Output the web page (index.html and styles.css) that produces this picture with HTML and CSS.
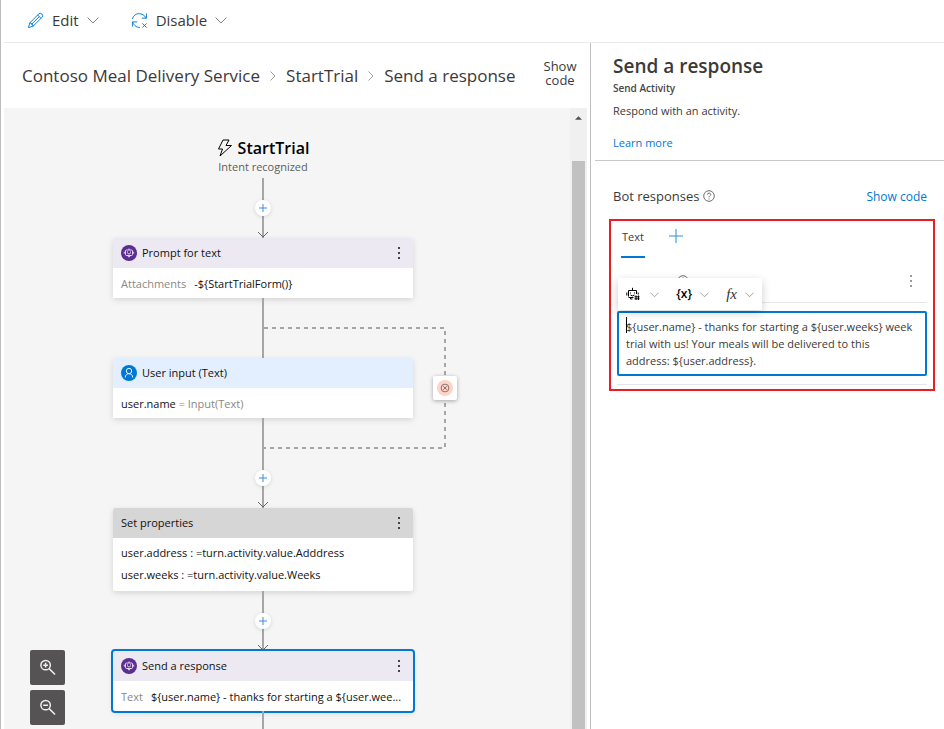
FILE: index.html
```html
<!DOCTYPE html>
<html lang="en">
<head>
<meta charset="utf-8">
<title>Contoso Meal Delivery Service</title>
<link rel="stylesheet" href="styles.css">
</head>
<body>
<svg class="defs" aria-hidden="true">
  <symbol id="chevron-down" viewBox="0 0 12 12"><path d="M.5 3.5 6 9l5.500-5.500" /></symbol>
  <symbol id="chevron-right" viewBox="0 0 8 12"><path d="M1.500 1.500 6 6l-4.500 4.500" /></symbol>
  <symbol id="kebab" viewBox="0 0 4 14"><rect x="1" y="1" width="2" height="2"/><rect x="1" y="6" width="2" height="2"/><rect x="1" y="11" width="2" height="2"/></symbol>
  <symbol id="plus" viewBox="0 0 8 8"><path d="M4 0v8M0 4h8"/></symbol>
  <symbol id="arrow" viewBox="0 0 12 7"><path d="M1 1l5 5 5-5"/></symbol>
  <symbol id="bot" viewBox="0 0 16 16">
    <circle cx="8" cy="8" r="8" fill="#5c2e91"/>
    <g fill="none" stroke="#fff" stroke-width=".8"><rect x="4.500" y="5" width="7" height="5.500" rx="1"/><path d="M8 5V3.500M3.300 6.700v2M12.700 6.700v2M6.500 10.500 8 12.200l1.500-1.700M6.500 8.500q1.500 1 3 0"/></g>
    <path d="M6 6.500h1v1H6zM9 6.500h1v1H9z" fill="#fff"/>
  </symbol>
  <symbol id="user" viewBox="0 0 16 16">
    <circle cx="8" cy="8" r="8" fill="#0078d7"/>
    <g fill="none" stroke="#fff" stroke-width=".9"><circle cx="8" cy="6" r="2.700"/><path d="M4.300 12.500C4.300 10 6 8.700 8 8.700s3.700 1.300 3.700 3.800"/></g>
  </symbol>
  <symbol id="help" viewBox="0 0 12 12"><circle cx="6" cy="6" r="5.300"/><path d="M4.300 4.700C4.300 2.500 7.700 2.600 7.700 4.600 7.700 5.800 6 5.800 6 7.300M6 8.400v1"/></symbol>
</svg>

<header class="toolbar">
  <button class="command" type="button">
    <svg class="command-icon" viewBox="0 0 18 18"><path d="M1.500 16.500 3 11.500 12.500 2Q14.200.6 15.800 2.200T16 5.500L6.500 15zM3 11.500Q6 12 6.500 15M11.300 3.200l3.500 3.500M4.600 13.300 13 5"/></svg>
    Edit
    <svg class="chevron"><use href="#chevron-down"/></svg>
  </button>
  <button class="command" type="button">
    <svg class="command-icon" viewBox="0 0 18 18"><path d="M1.500 7.500C3 0 13 0 16 6.500M16.500 1.500v5h-5M1.500 15.500v-5h5M1.800 10.800C3.500 15 6.500 16.500 9.500 16.300M12 12l4.500 4.500M16.500 12 12 16.500"/></svg>
    Disable
    <svg class="chevron"><use href="#chevron-down"/></svg>
  </button>
</header>

<div class="workspace">
  <main class="editor">
    <div class="editor-head">
      <nav class="breadcrumb" aria-label="Breadcrumb">
        <a href="#">Contoso Meal Delivery Service</a>
        <svg><use href="#chevron-right"/></svg>
        <a href="#">StartTrial</a>
        <svg><use href="#chevron-right"/></svg>
        <a href="#">Send a response</a>
      </nav>
      <button class="code-toggle" type="button">Show code</button>
    </div>

    <div class="canvas">
      <div class="stage">
        <div class="flow">
          <div class="trigger">
            <h1><svg viewBox="0 0 16 18"><path d="M6 1h6L9 6.500h5.500L3 17l2.500-7H1.500z"/></svg>StartTrial</h1>
            <p>Intent recognized</p>
          </div>

          <div class="link">
            <button class="add" type="button" aria-label="Add action"><svg><use href="#plus"/></svg></button>
            <svg class="arrow"><use href="#arrow"/></svg>
          </div>

          <section class="card">
            <header class="card-head prompt"><svg class="badge"><use href="#bot"/></svg><span>Prompt for text</span>
              <button class="more" type="button" aria-label="More"><svg><use href="#kebab"/></svg></button></header>
            <p class="card-line"><span class="muted">Attachments</span><span>-${StartTrialForm()}</span></p>
          </section>

          <div class="link"></div>

          <section class="card">
            <header class="card-head input"><svg class="badge"><use href="#user"/></svg><span>User input (Text)</span></header>
            <p class="card-line"><span>user.name <span class="muted">= Input(Text)</span></span></p>
            <div class="retry">
              <svg class="retry-path" viewBox="0 0 183 122"><path d="M1 1h181v120H1"/></svg>
              <button class="retry-node" type="button" aria-label="Invalid input">
                <svg viewBox="0 0 16 16"><circle cx="8" cy="8" r="8" fill="#ffd3c7"/><g fill="none" stroke="#6b5a58" stroke-width=".8"><circle cx="8" cy="8" r="3.900"/><path d="M6.200 6.200l3.600 3.600M9.800 6.200 6.200 9.800"/></g></svg>
              </button>
            </div>
          </section>

          <div class="link tall">
            <button class="add" type="button" aria-label="Add action"><svg><use href="#plus"/></svg></button>
            <svg class="arrow"><use href="#arrow"/></svg>
          </div>

          <section class="card">
            <header class="card-head props"><span>Set properties</span>
              <button class="more" type="button" aria-label="More"><svg><use href="#kebab"/></svg></button></header>
            <div class="card-list">
              <p>user.address : =turn.activity.value.Adddress</p>
              <p>user.weeks : =turn.activity.value.Weeks</p>
            </div>
          </section>

          <div class="link">
            <button class="add" type="button" aria-label="Add action"><svg><use href="#plus"/></svg></button>
            <svg class="arrow"><use href="#arrow"/></svg>
          </div>

          <section class="card selected">
            <header class="card-head prompt"><svg class="badge"><use href="#bot"/></svg><span>Send a response</span>
              <button class="more" type="button" aria-label="More"><svg><use href="#kebab"/></svg></button></header>
            <p class="card-line"><span class="muted">Text</span><span>${user.name} - thanks for starting a ${user.wee...</span></p>
          </section>

          <div class="link"></div>
        </div>
        <div class="zoom">
          <button type="button" aria-label="Zoom in"><svg viewBox="0 0 18 18"><circle cx="7" cy="6.500" r="5"/><path d="M10.700 10.200 17 16.500M4.500 6.500h5M7 4v5"/></svg></button>
          <button type="button" aria-label="Zoom out"><svg viewBox="0 0 18 18"><circle cx="7" cy="6.500" r="5"/><path d="M10.700 10.200 17 16.500M4.500 6.500h5"/></svg></button>
        </div>
      </div>
      <div class="scrollbar"><svg viewBox="0 0 8 4"><path d="M0 4 4 0l4 4z"/></svg><div class="thumb"></div></div>
    </div>
  </main>

  <aside class="panel">
    <div class="panel-head">
      <h2>Send a response</h2>
      <h3>Send Activity</h3>
      <p>Respond with an activity.</p>
      <a href="#">Learn more</a>
    </div>
    <div class="responses-head">
      <span>Bot responses</span><svg class="help"><use href="#help"/></svg>
      <a href="#">Show code</a>
    </div>
    <section class="responses">
      <div class="tabs">
        <button class="tab" type="button">Text</button>
        <button class="tab-add" type="button" aria-label="Add response type"><svg><use href="#plus"/></svg></button>
      </div>
      <div class="variation">
        <svg class="help"><use href="#help"/></svg>
        <button class="more" type="button" aria-label="More"><svg><use href="#kebab"/></svg></button>
        <div class="insert">
          <button type="button" aria-label="Insert template">
            <svg class="insert-bot" viewBox="0 0 14 14"><path d="M2.500 9.500v-6h8v3.500M2.500 10.500h5M6.500 3.500V.8M.8 5.500v3M12.200 5.500v2M4.500 8q1.800 1.800 4 0M4.500 5.500v1M8.500 5.500v1M4.500 10.500v1.500h2"/><path d="M10 8.500v4.500M12.500 8.500v4.500M8.500 9.800h5M8.500 11.800h5"/></svg>
            <svg class="chevron"><use href="#chevron-down"/></svg></button>
          <button type="button"><b>{x}</b><svg class="chevron"><use href="#chevron-down"/></svg></button>
          <button type="button"><i>fx</i><svg class="chevron"><use href="#chevron-down"/></svg></button>
        </div>
      </div>
      <div class="field">
        <textarea rows="3" spellcheck="false" aria-label="Response text">${user.name} - thanks for starting a ${user.weeks} week trial with us! Your meals will be delivered to this address: ${user.address}.</textarea>
        <span class="caret"></span>
      </div>
    </section>
  </aside>
</div>
</body>
</html>
```
FILE: styles.css
```css
* { box-sizing: border-box; }
body {
  margin: 0;
  height: 100vh;
  display: flex;
  flex-direction: column;
  border-left: 1px solid #bdbdbd;
  background: #fff;
  color: #3b3a39;
  font: 11px/16px "Open Sans", "Noto Sans", sans-serif;
  overflow: hidden;
}
h1, h2, h3, p { margin: 0; font-weight: 400; }
button { border: 0; padding: 0; background: none; color: inherit; font: inherit; }
a { color: #0078d4; text-decoration: none; }
svg { display: block; flex: none; fill: none; stroke: currentColor; overflow: visible; }
.defs { position: absolute; width: 0; height: 0; }

.toolbar {
  display: flex;
  align-items: center;
  gap: 32px;
  height: 43px;
  margin-left: 3px;
  padding: 0 23px 2px;
  border-bottom: 1px solid #eaeaea;
}
.command { display: flex; align-items: center; gap: 8px; font-size: 15px; }
.command-icon { width: 17px; height: 17px; color: #0078d4; }
.chevron { width: 12px; height: 12px; color: #8a8886; }

.workspace { flex: 1; min-height: 0; display: grid; grid-template-columns: minmax(0, 1fr) 354px; }
.editor { display: flex; flex-direction: column; min-height: 0; padding: 0 3px; }
.editor-head { display: flex; align-items: center; height: 65px; padding: 0 7px 0 18px; }
.breadcrumb { flex: 1; display: flex; align-items: center; gap: 9px; font-size: 17px; white-space: nowrap; }
.breadcrumb a { color: inherit; }
.breadcrumb svg { width: 8px; height: 12px; color: #a19f9d; }
.code-toggle { width: 40px; font-size: 13px; line-height: 14px; padding-bottom: 6px; }

.canvas { flex: 1; min-height: 0; display: flex; background: #f5f5f5; overflow: hidden; }
.stage { flex: 1; position: relative; }
.flow { width: 348px; margin: 0 auto; padding: 29px 48px 0 0; color: #111; }
.trigger { height: 41px; display: flex; flex-direction: column; align-items: center; color: #605e5c; }
.trigger h1 { display: flex; align-items: center; gap: 5px; font-size: 16px; line-height: 22px; font-weight: 600; color: #000; }
.trigger svg { width: 16px; height: 18px; }

.link {
  position: relative;
  height: 60px;
  display: flex;
  align-items: center;
  justify-content: center;
  background: linear-gradient(#a6a6a6, #a6a6a6) center / 2px 100% no-repeat;
}
.link.tall { height: 90px; padding-top: 30px; }
.add { width: 16px; height: 16px; display: grid; place-items: center; border-radius: 50%; background: #fff; box-shadow: 0 1px 4px #0002; color: #3b8be8; }
.add svg { width: 8px; height: 8px; }
.arrow { position: absolute; bottom: 0; left: 144px; width: 12px; height: 7px; color: #666; }

.card { position: relative; z-index: 0; background: #fff; border-radius: 2px; box-shadow: 0 2px 6px #0002; }
.card-head { display: flex; align-items: center; gap: 5px; height: 30px; padding: 0 12px 0 8px; border-radius: 2px 2px 0 0; }
.card-line { background: #fff; }
.prompt { background: #ede9f3; }
.input { background: #e3efff; }
.props { background: #d6d6d6; }
.badge { width: 16px; height: 16px; stroke: none; }
.more { margin-left: auto; }
.more svg { width: 4px; height: 14px; fill: #444; stroke: none; }
.card-line { display: flex; align-items: center; gap: 8px; height: 30px; padding: 1px 8px 0; white-space: nowrap; }
.card-list { padding: 4px 8px 5px; line-height: 22px; }
.muted { color: #8a8886; }
.selected { outline: 2px solid #0078d4; }

.retry { position: absolute; left: 150px; top: -31px; width: 183px; height: 122px; z-index: -1; }
.retry-path { width: 183px; height: 122px; stroke: #a6a6a6; stroke-width: 2; stroke-dasharray: 4; }
.retry-node { position: absolute; right: -11px; top: 49px; width: 24px; height: 24px; display: grid; place-items: center; border-radius: 2px; background: #fff; box-shadow: 0 1px 4px #0005; }
.retry-node svg { width: 16px; height: 16px; stroke: none; }

.zoom { position: absolute; left: 26px; bottom: 4px; display: grid; gap: 5px; }
.zoom button { width: 35px; height: 35px; display: grid; place-items: center; border-radius: 2px; background: #565354; color: #eee; }
.zoom svg { width: 17px; height: 17px; stroke-width: 1.6; }

.scrollbar { width: 17px; display: flex; flex-direction: column; align-items: center; gap: 41px; padding-top: 8px; background: #f0f0f0; }
.scrollbar svg { width: 7px; height: 4px; fill: #505050; stroke: none; }
.thumb { flex: 1; width: 13px; background: #c1c1c1; }

.panel { border-left: 1px solid #bdbdbd; padding-left: 4px; }
.panel-head { height: 118px; padding: 11px 18px 0; border-bottom: 1px solid #c8c8c8; }
.panel-head h2 { font-size: 19px; line-height: 24px; font-weight: 600; }
.panel-head h3 { font-size: 10px; line-height: 20px; font-weight: 600; color: #484644; }
.panel-head p { margin: 5px 0 16px; }
.panel-head a { display: block; }
.responses-head { display: flex; align-items: center; gap: 4px; padding: 25px 17px 13px 18px; font-size: 13px; line-height: 20px; }
.responses-head a { margin-left: auto; padding-top: 2px; font-size: 12px; line-height: 18px; }
.help { width: 12px; height: 12px; color: #605e5c; stroke-width: .9; }

.responses { margin: 0 9px 0 14px; padding: 0 6px 13px; border: 2px solid #ec1c24; }
.tabs { display: flex; align-items: flex-start; gap: 24px; padding: 0 4px; }
.tab { height: 37px; padding: 0 1px 4px; border-bottom: 2px solid #0078d4; }
.tab-add { margin-top: 8px; color: #0078d4; opacity: .8; }
.tab-add svg { width: 14px; height: 14px; stroke-width: .6; }
.variation { position: relative; display: flex; align-items: center; height: 45px; padding: 2px 14px 0 60px; border-bottom: 1px solid #e6e6e6; }
.variation .more svg { fill: #999; }
.insert {
  position: absolute;
  left: 1px;
  top: 20px;
  width: 144px;
  height: 32px;
  display: flex;
  align-items: center;
  justify-content: space-between;
  padding: 0 8px;
  background: #fff;
  box-shadow: 0 3px 10px #0003;
  z-index: 1;
}
.insert button { display: flex; align-items: center; gap: 8px; font-size: 12px; color: #000; }
.insert b { font-weight: 600; }
.insert i { font: italic 15px "Liberation Serif", serif; color: #333; }
.insert .chevron { width: 9px; height: 9px; }
.insert button:first-child { gap: 10px; }
.insert-bot { width: 14px; height: 14px; stroke-width: 1; }
.field { position: relative; padding-top: 8px; }
.field::after { content: ""; position: absolute; left: 0; right: 0; bottom: -9px; border-bottom: 1px solid #e6e6e6; }
textarea {
  display: block;
  width: 100%;
  padding: 5px 12px 5px 7px;
  border: 2px solid #0078d4;
  border-radius: 2px;
  outline: 0;
  resize: none;
  overflow: hidden;
  color: inherit;
  font: inherit;
  line-height: 17px;
}
.caret { position: absolute; left: 9px; top: 14px; width: 1px; height: 16px; background: #000; }
```
